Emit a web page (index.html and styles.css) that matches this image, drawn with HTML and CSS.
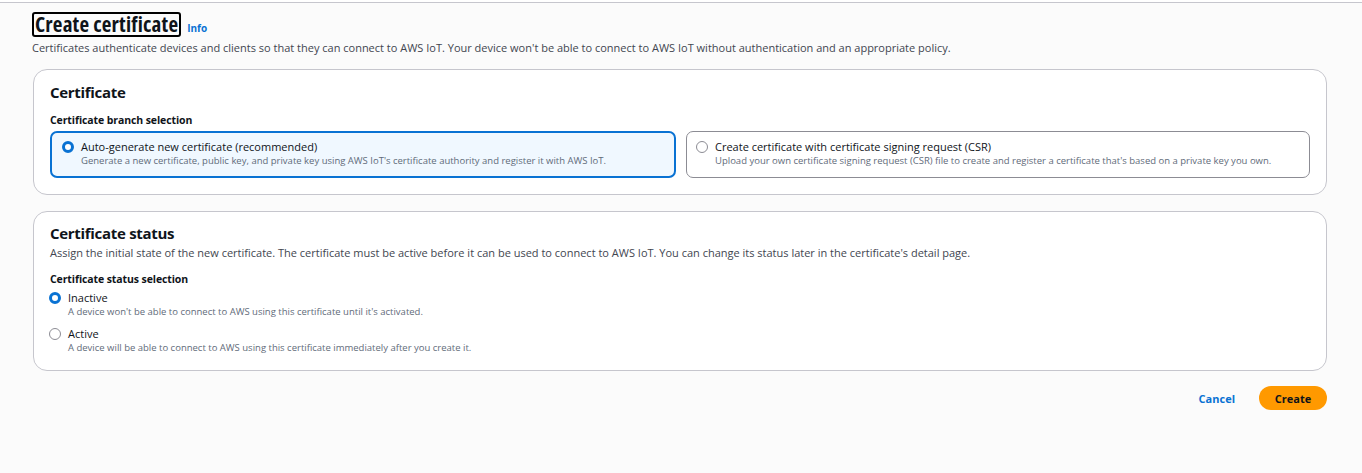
FILE: index.html
```html
<!DOCTYPE html>
<html>
<head>
<meta charset="utf-8">
<link rel="stylesheet" href="styles.css">
</head>
<body>
<div class="topline"></div>
<main class="page">
  <header class="page-header">
    <div class="title-row">
      <h1 class="title">Create certificate</h1>
      <a class="info">Info</a>
    </div>
    <p class="page-desc">Certificates authenticate devices and clients so that they can connect to AWS IoT. Your device won't be able to connect to AWS IoT without authentication and an appropriate policy.</p>
  </header>

  <section class="container">
    <h2 class="container-title">Certificate</h2>
    <div class="field-label">Certificate branch selection</div>
    <div class="tiles">
      <div class="tile selected">
        <span class="radio checked"></span>
        <div class="tile-text">
          <div class="opt-label">Auto-generate new certificate (recommended)</div>
          <div class="opt-desc">Generate a new certificate, public key, and private key using AWS IoT's certificate authority and register it with AWS IoT.</div>
        </div>
      </div>
      <div class="tile">
        <span class="radio"></span>
        <div class="tile-text">
          <div class="opt-label">Create certificate with certificate signing request (CSR)</div>
          <div class="opt-desc">Upload your own certificate signing request (CSR) file to create and register a certificate that's based on a private key you own.</div>
        </div>
      </div>
    </div>
  </section>

  <section class="container status">
    <h2 class="container-title">Certificate status</h2>
    <p class="container-desc">Assign the initial state of the new certificate. The certificate must be active before it can be used to connect to AWS IoT. You can change its status later in the certificate's detail page.</p>
    <div class="field-label">Certificate status selection</div>
    <div class="radio-group">
      <div class="radio-item">
        <span class="radio checked"></span>
        <div>
          <div class="opt-label">Inactive</div>
          <div class="opt-desc">A device won't be able to connect to AWS using this certificate until it's activated.</div>
        </div>
      </div>
      <div class="radio-item">
        <span class="radio"></span>
        <div>
          <div class="opt-label">Active</div>
          <div class="opt-desc">A device will be able to connect to AWS using this certificate immediately after you create it.</div>
        </div>
      </div>
    </div>
  </section>

  <div class="actions">
    <a class="btn-link">Cancel</a>
    <button class="btn-primary">Create</button>
  </div>
</main>
</body>
</html>
```

FILE: styles.css
```css
* { box-sizing: border-box; }
html, body { margin: 0; padding: 0; }
body {
  background: #fbfbfb;
  font-family: "Open Sans", "Noto Sans", sans-serif;
  color: #0f141a;
  height: 473px;
  overflow: hidden;
}
.topline {
  height: 3px;
  border-bottom: 1px solid #c6c6cd;
  background: #fff;
}
.page {
  padding: 9px 35px 0 32px;
}
.title-row {
  display: flex;
  align-items: baseline;
  gap: 6px;
}
.title {
  margin: 0;
  font-size: 21px;
  font-weight: 700;
  font-stretch: 87.5%;
  line-height: 21px;
  padding: 0 1px;
  border: 2px solid #000;
  border-radius: 3px;
  letter-spacing: 0.2px;
}
.info {
  font-size: 10px;
  font-weight: 700;
  color: #0972d3;
}
.page-desc {
  margin: 3px 0 0;
  font-size: 11px;
  line-height: 16px;
  color: #424650;
}
.container {
  margin: 13px 0 0 1px;
  background: #fff;
  border: 1px solid #c6c6cd;
  border-radius: 14px;
  padding: 11px 16px 16px 16px;
}
.container.status { margin-top: 16px; padding: 10px 16px 16px 16px; }
.container-title {
  margin: 0;
  font-size: 15px;
  font-weight: 700;
  line-height: 22px;
  letter-spacing: -0.3px;
}
.container-desc {
  margin: 1px 0 0;
  font-size: 11px;
  line-height: 16px;
  color: #424650;
}
.field-label {
  margin-top: 9px;
  font-size: 10.5px;
  font-weight: 700;
  line-height: 16px;
  letter-spacing: -0.1px;
}
.status .field-label { margin-top: 10px; }
.tiles {
  display: flex;
  gap: 10px;
  margin-top: 3px;
}
.tile {
  flex: 1;
  display: flex;
  gap: 7px;
  border: 1px solid #8c8c94;
  border-radius: 7px;
  padding: 7px 12px 9px 9px;
  min-height: 47px;
}
.tile.selected {
  border: 2px solid #0972d3;
  background: #f0f8ff;
  padding: 6px 11px 8px 10px;
}
.radio {
  flex: none;
  width: 12px;
  height: 12px;
  border-radius: 50%;
  border: 1px solid #8c8c94;
  background: #fff;
  margin-top: 2px;
}
.radio.checked {
  border: 3.5px solid #0972d3;
}
.opt-label {
  font-size: 11px;
  line-height: 15px;
}
.opt-desc {
  font-size: 9.5px;
  line-height: 13px;
  color: #5f6b7a;
}
.radio-group {
  margin-top: 3px;
  display: flex;
  flex-direction: column;
  gap: 8px;
}
.radio-item {
  display: flex;
  gap: 7px;
  margin-left: -1px;
}
.radio-item .radio { margin-top: 2px; }
.actions {
  display: flex;
  justify-content: flex-end;
  align-items: center;
  gap: 24px;
  margin-top: 15px;
}
.btn-link {
  font-size: 11px;
  font-weight: 700;
  color: #0972d3;
}
.btn-primary {
  font-family: inherit;
  font-size: 11px;
  font-weight: 700;
  color: #0f141a;
  background: #ff9900;
  border: none;
  border-radius: 12px;
  height: 24px;
  width: 68px;
  padding: 0;
}
```
